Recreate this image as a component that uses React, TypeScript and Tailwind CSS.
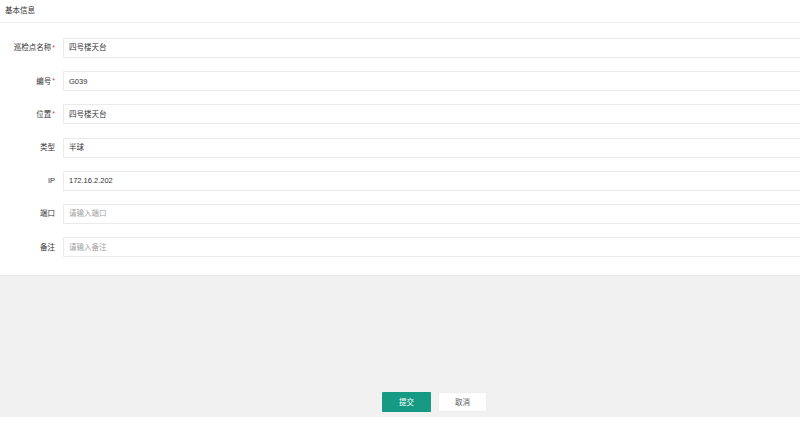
import React from "react";

const rows: { label: string; req?: boolean; value?: string; placeholder?: string }[] = [
  { label: "巡检点名称", req: true, value: "四号楼天台" },
  { label: "编号", req: true, value: "G039" },
  { label: "位置", req: true, value: "四号楼天台" },
  { label: "类型", value: "半球" },
  { label: "IP", value: "172.16.2.202" },
  { label: "端口", placeholder: "请输入端口" },
  { label: "备注", placeholder: "请输入备注" },
];

export default function App() {
  return (
    <div
      className="w-[800px] h-[435px] bg-white flex flex-col overflow-hidden text-[#333]"
      style={{ fontFamily: '"Liberation Sans", "Noto Sans CJK SC", sans-serif' }}
    >
      <div className="h-[23px] border-b border-[#eeeeee] flex items-center pl-[5px] text-[7.5px] text-[#333]">
        基本信息
      </div>
      <div className="flex flex-col gap-[13.2px] pt-[15px] pb-[18px]">
        {rows.map((r) => (
          <div key={r.label} className="flex items-center h-[20px]">
            <div className="w-[57px] shrink-0 flex justify-end items-center pr-[2px] text-[7.5px] text-[#333]">
              <span>{r.label}</span>
              {r.req ? (
                <span className="text-[#e4393c] text-[7px] leading-none ml-[1px] relative -top-[1px]">*</span>
              ) : (
                <span className="w-[0px]" />
              )}
            </div>
            <div className="ml-[6px] flex-1 h-[20px] border border-[#ebebeb] bg-white flex items-center pl-[5px] text-[7.5px] -mr-[2px]">
              {r.value ? (
                <span className="text-[#333]">{r.value}</span>
              ) : (
                <span className="text-[#a0a0a0]">{r.placeholder}</span>
              )}
            </div>
          </div>
        ))}
      </div>
      <div className="h-[142px] bg-[#f1f1f1] border-t border-[#e8e8e8] flex items-end pb-[5px] pl-[382px] gap-[7px]">
        <div className="w-[49px] h-[20px] bg-[#169a84] text-white text-[7.5px] flex items-center justify-center rounded-[1px]">
          提交
        </div>
        <div className="w-[49px] h-[20px] bg-white text-[#555] text-[7.5px] flex items-center justify-center border border-[#eeeeee] rounded-[1px]">
          取消
        </div>
      </div>
      <div className="flex-1 bg-white" />
    </div>
  );
}
